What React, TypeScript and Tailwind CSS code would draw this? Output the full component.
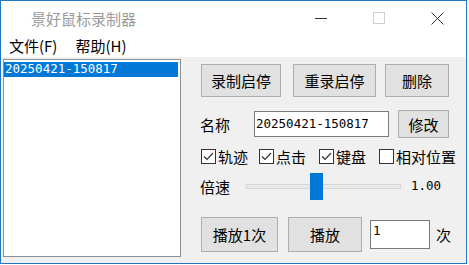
import React from "react";

const CJK = { fontFamily: '"Noto Sans CJK SC", "Noto Sans", sans-serif' };
const MONO = { fontFamily: '"DejaVu Sans Mono", "Liberation Mono", monospace' };

function Btn({ w, h, children }: { w: string; h: string; children: React.ReactNode }) {
  return (
    <div
      className={`${w} ${h} bg-[#e1e1e1] border border-[#adadad] flex items-center justify-center text-[15px] leading-none text-black shrink-0`}
    >
      {children}
    </div>
  );
}

function Check({ checked, label, w }: { checked: boolean; label: string; w: string }) {
  return (
    <div className={`${w} flex items-center shrink-0`}>
      <div className="w-[15px] h-[15px] border border-[#333333] bg-white flex items-center justify-center shrink-0">
        {checked && (
          <svg width="13" height="13" viewBox="0 0 13 13">
            <path d="M2 6.5 L5 9.5 L11 3" fill="none" stroke="#333333" strokeWidth="1.2" />
          </svg>
        )}
      </div>
      <span className="ml-[2px] text-[15px] leading-none whitespace-nowrap">{label}</span>
    </div>
  );
}

export default function App() {
  return (
    <div className="w-[469px] h-[265px] bg-white" style={CJK}>
      <div className="w-[467px] h-[264px] border border-[#2176c0] flex flex-col bg-[#f0f0f0] text-black">
        {/* title bar */}
        <div className="h-[30px] bg-white flex items-center pt-[4px] shrink-0">
          <span className="ml-[30px] text-[15px] leading-none text-[#9a9a9a]">景好鼠标录制器</span>
          <div className="ml-auto flex h-full items-center">
            <div className="w-[58px] flex justify-center">
              <div className="w-[12px] h-[1px] bg-[#333]" />
            </div>
            <div className="w-[58px] flex justify-center">
              <div className="w-[12px] h-[12px] border border-[#d0d0d0]" />
            </div>
            <div className="w-[58px] flex justify-center">
              <svg width="13" height="13" viewBox="0 0 13 13">
                <path d="M0.5 0.5 L12.5 12.5 M12.5 0.5 L0.5 12.5" stroke="#333" strokeWidth="1" />
              </svg>
            </div>
          </div>
        </div>
        {/* menu bar */}
        <div className="h-[26px] bg-white flex items-center pt-[3px] shrink-0 text-[15px] leading-none">
          <span className="ml-[8px]">文件(F)</span>
          <span className="ml-[18px]">帮助(H)</span>
        </div>
        {/* client */}
        <div className="flex-1 flex">
          <div className="ml-[2px] mt-[2px] w-[178px] h-[198px] bg-white border border-[#8a9098] pt-[2px] pr-[2px] shrink-0">
            <div className="h-[15px] bg-[#0078d7] text-white flex items-center pl-[1px] text-[12.5px] leading-none" style={MONO}>
              20250421-150817
            </div>
          </div>
          <div className="ml-[20px] pt-[7px] flex flex-col">
            {/* row 1 */}
            <div className="flex">
              <Btn w="w-[80px]" h="h-[33px]">录制启停</Btn>
              <div className="ml-[12px]">
                <Btn w="w-[83px]" h="h-[33px]">重录启停</Btn>
              </div>
              <div className="ml-[9px]">
                <Btn w="w-[64px]" h="h-[33px]">删除</Btn>
              </div>
            </div>
            {/* row 2 */}
            <div className="mt-[13px] h-[28px] flex items-center">
              <span className="w-[54px] -ml-[1px] text-[15px] leading-none shrink-0">名称</span>
              <div className="w-[135px] h-[26px] bg-white border border-[#7a7a7a] flex items-center pl-[1px] text-[12.5px] leading-none shrink-0" style={MONO}>
                20250421-150817
              </div>
              <div className="ml-[9px]">
                <Btn w="w-[51px]" h="h-[28px]">修改</Btn>
              </div>
            </div>
            {/* row 3 */}
            <div className="mt-[10px] h-[16px] flex items-center">
              <Check checked label="轨迹" w="w-[58px]" />
              <Check checked label="点击" w="w-[60px]" />
              <Check checked label="键盘" w="w-[60px]" />
              <Check checked={false} label="相对位置" w="w-[80px]" />
            </div>
            {/* row 4 */}
            <div className="mt-[8px] h-[29px] flex items-center">
              <span className="w-[46px] -ml-[1px] text-[15px] leading-none shrink-0">倍速</span>
              <div className="relative w-[155px] h-[29px] shrink-0">
                <div className="absolute left-0 right-0 top-[12px] h-[5px] bg-[#e7eaea] border border-[#d6d6d6]" />
                <div className="absolute left-[64px] top-[1px] w-[13px] h-[27px] bg-[#0078d7]" />
              </div>
              <span className="ml-[10px] text-[12.5px] leading-none" style={MONO}>1.00</span>
            </div>
            {/* row 5 */}
            <div className="mt-[16px] h-[35px] flex items-center">
              <Btn w="w-[77px]" h="h-[35px]">播放1次</Btn>
              <div className="ml-[10px]">
                <Btn w="w-[74px]" h="h-[35px]">播放</Btn>
              </div>
              <div className="ml-[8px] w-[60px] h-[29px] bg-white border border-[#7a7a7a] flex items-start pt-[4px] pl-[2px] text-[12.5px] leading-none shrink-0" style={MONO}>
                1
              </div>
              <span className="ml-[6px] text-[15px] leading-none">次</span>
            </div>
          </div>
        </div>
      </div>
    </div>
  );
}
